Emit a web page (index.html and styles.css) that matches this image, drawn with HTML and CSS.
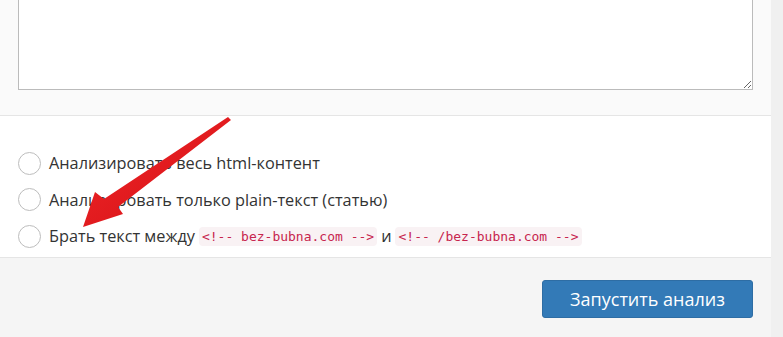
FILE: index.html
```html
<!DOCTYPE html>
<html lang="ru">

<head>
    <meta charset="UTF-8">
    <meta name="viewport" content="width=device-width, initial-scale=1.0">
    <title>Анализ текста</title>
    <link rel="stylesheet" href="styles.css">
</head>

<body>

    <div class="page">
        <div class="panel">
            <div class="top">
                <textarea class="source"></textarea>
            </div>

            <div class="options">
                <label class="option">
                    <span class="radio"></span>
                    Анализировать весь html-контент
                </label>
                <label class="option">
                    <span class="radio"></span>
                    Анализировать только plain-текст (статью)
                </label>
                <label class="option">
                    <span class="radio"></span>
                    Брать текст между <code>&lt;!-- bez-bubna.com --&gt;</code> и <code>&lt;!-- /bez-bubna.com --&gt;</code>
                </label>

                <!-- стрелка-пометка поверх текста -->
                <svg class="arrow" width="260" height="140" viewBox="0 0 260 140">
                    <defs>
                        <linearGradient id="red" x1="0" y1="0" x2="1" y2="1">
                            <stop offset="0" stop-color="#f0282a" />
                            <stop offset="1" stop-color="#d40f14" />
                        </linearGradient>
                    </defs>
                    <polygon points="228,1 231,4 118,91 123,98 83,111 95,76 104,83" fill="url(#red)" />
                </svg>
            </div>

            <div class="footer">
                <button class="btn">Запустить анализ</button>
            </div>
        </div>
        <div class="side"></div>
    </div>

</body>

</html>
```

FILE: styles.css
```css
html, body {
    overflow: hidden;
}

body {
    margin: 0;
    font-family: "Open Sans", Arial, sans-serif;
    color: #333;
    background: #f0f0f0;
}

.page {
    display: flex;
    height: 337px;
}

.panel {
    width: 771px;
    display: flex;
    flex-direction: column;
}

.side {
    flex: 1;
    background: #f0f0f0;
}

.top {
    flex-shrink: 0;
    box-sizing: border-box;
    background: #fafafa;
    height: 116px;
    padding: 0 18px;
    border-bottom: 1px solid #e5e5e5;
    overflow: hidden;
}

.source {
    display: block;
    box-sizing: border-box;
    width: 100%;
    height: 100px;
    margin-top: -10px;
    border: 1px solid #bbb;
    background: #fff;
}

.options {
    flex-shrink: 0;
    position: relative;
    background: #fff;
    height: 142px;
    padding: 29px 18px 0 18px;
    box-sizing: border-box;
    border-bottom: 1px solid #e5e5e5;
}

.option {
    display: flex;
    align-items: center;
    height: 36.5px;
    font-size: 16.3px;
    white-space: nowrap;
}

.radio {
    width: 23px;
    height: 23px;
    box-sizing: border-box;
    border: 1px solid #bdbdbd;
    border-radius: 50%;
    background: #fff;
    margin-right: 8px;
    flex-shrink: 0;
}

code {
    font-family: "DejaVu Sans Mono", monospace;
    font-size: 13px;
    color: #c7254e;
    background: #f9f2f4;
    border-radius: 4px;
    padding: 2px 3px;
    margin: 0 4px;
}

.arrow {
    position: absolute;
    left: 0;
    top: 0;
}

.footer {
    flex: 1;
    background: #f5f5f5;
    display: flex;
    justify-content: flex-end;
    align-items: flex-start;
    padding: 22px 18px 0 0;
}

.btn {
    width: 211px;
    height: 38px;
    border: 1px solid #2e6da4;
    border-radius: 3px;
    background: #337ab7;
    color: #fff;
    font-family: "Open Sans", Arial, sans-serif;
    font-size: 18px;
    cursor: pointer;
}
```
